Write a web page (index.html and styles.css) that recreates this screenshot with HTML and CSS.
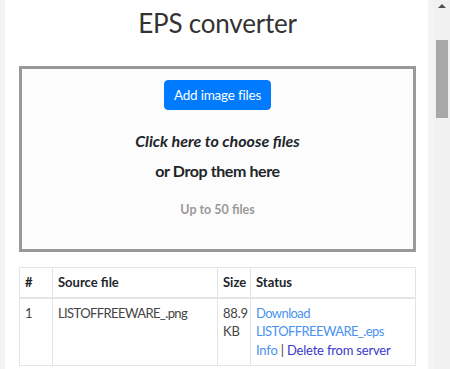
FILE: index.html
```html
<!DOCTYPE html>
<html lang="en">
<head>
  <meta charset="UTF-8">
  <meta name="viewport" content="width=device-width, initial-scale=1">
  <title>EPS converter</title>
  <link rel="stylesheet" href="styles.css">
</head>
<body>

<!-- Main page -->
<div class="page">
  <h1 class="title">EPS converter</h1>

  <!-- Drop zone -->
  <div class="dropzone">
    <button class="btn-add">Add image files</button>
    <p class="choose">Click here to choose files</p>
    <p class="drop">or Drop them here</p>
    <p class="limit">Up to 50 files</p>
  </div>

  <!-- Files table -->
  <table class="files">
    <colgroup>
      <col class="c-num">
      <col class="c-src">
      <col class="c-size">
      <col class="c-status">
    </colgroup>
    <thead>
      <tr>
        <th>#</th>
        <th>Source file</th>
        <th>Size</th>
        <th>Status</th>
      </tr>
    </thead>
    <tbody>
      <tr>
        <td>1</td>
        <td class="src">LISTOFFREEWARE_.png</td>
        <td>88.9 KB</td>
        <td>
          <a href="#" class="src">Download<br>LISTOFFREEWARE_.eps</a><br>
          <a href="#">Info</a> | <a href="#" class="visited">Delete from server</a>
        </td>
      </tr>
    </tbody>
  </table>
</div>

<!-- Scrollbar -->
<div class="scrollbar">
  <div class="arrow"></div>
  <div class="thumb"></div>
</div>

</body>
</html>
```

FILE: styles.css
```css
body {
  margin: 0;
  height: 100vh;
  overflow: hidden;
  display: flex;
  background: #f3f3f3;
  font-family: Lato, 'Noto Sans', sans-serif;
  color: #212529;
}

.page {
  width: 397px;
  margin-left: 5px;
  padding: 0 12px 0 14px;
  background: #fff;
}

.title {
  margin: 8px 0 27px;
  font-size: 26px;
  font-weight: 400;
  line-height: 31px;
  letter-spacing: -0.2px;
  text-align: center;
  color: #333;
}

.dropzone {
  border: 3px solid #999;
  background: #fcfcfc;
  text-align: center;
  padding-top: 11px;
  height: 169px;
}

.btn-add {
  font-family: inherit;
  font-size: 13.5px;
  letter-spacing: -0.2px;
  line-height: 20px;
  padding: 4px 9px;
  color: #fff;
  background: #007bff;
  border: 1px solid #007bff;
  border-radius: 4px;
}

.dropzone p {
  margin: 0;
  font-size: 16px;
  line-height: 24px;
}

.choose {
  margin-top: 19px !important;
  font-style: italic;
  font-weight: 700;
}

.drop {
  margin-top: 6px !important;
  font-weight: 700;
  letter-spacing: -0.4px;
}

.limit {
  margin-top: 15px !important;
  font-size: 12.5px !important;
  font-weight: 700;
  color: #999;
}

.files {
  width: 397px;
  margin-top: 15px;
  border-collapse: collapse;
  table-layout: fixed;
  font-size: 13px;
  line-height: 18.5px;
  color: #444;
}

.c-num { width: 33px; }
.c-src { width: 165px; }
.c-size { width: 33px; }

.files th,
.files td {
  border: 1px solid #e3e6e9;
  padding: 5px 5px;
  text-align: left;
  vertical-align: top;
}

.files th {
  color: #212529;
  border-bottom-width: 2px;
}

.files td {
  padding-bottom: 6px;
  letter-spacing: -0.2px;
}

.files .src {
  letter-spacing: -0.6px;
}

.files a {
  color: #4a93f0;
  text-decoration: none;
}

.files a.visited {
  color: #3838c8;
}

.scrollbar {
  margin-left: 6px;
  width: 17px;
  background: #f1f1f1;
  display: flex;
  flex-direction: column;
  align-items: center;
}

.arrow {
  margin-top: 4px;
  width: 0;
  height: 0;
  border-left: 4px solid transparent;
  border-right: 4px solid transparent;
  border-bottom: 4px solid #505050;
}

.thumb {
  margin-top: 32px;
  width: 12px;
  height: 78px;
  background: #a8a8a8;
}
```
